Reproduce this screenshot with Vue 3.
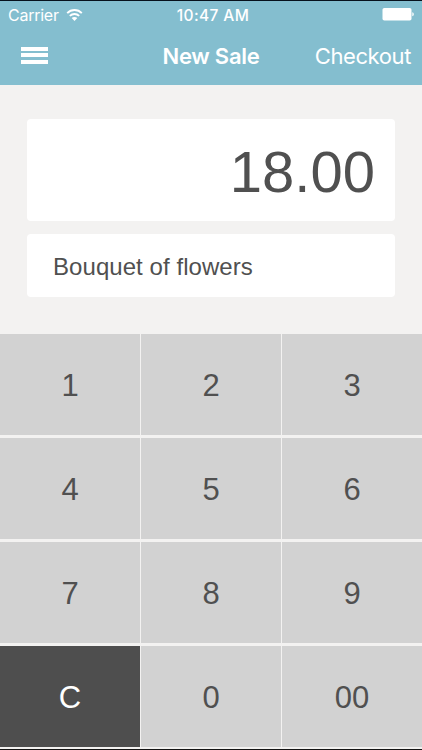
<script setup>
import { ref } from 'vue'

const amount = ref('18.00')
const description = ref('Bouquet of flowers')

const keys = ['1', '2', '3', '4', '5', '6', '7', '8', '9', 'C', '0', '00']

const pressKey = (key) => {
  if (key === 'C') {
    amount.value = '0.00'
    return
  }
  const cents = Number(amount.value.replace('.', '') + key)
  if (cents < 10000000) {
    amount.value = (cents / 100).toFixed(2)
  }
}
</script>

<template>
  <div class="screen">
    <header class="header">
      <div class="status-bar">
        <div class="carrier">
          <span class="carrier-name">Carrier</span>
          <svg class="wifi" width="17" height="12" viewBox="0 0 17 12">
            <path d="M1.2 4.2C5.3 0 11.7 0 15.8 4.2" />
            <path d="M3.8 6.9C6.5 4.3 10.5 4.3 13.2 6.9" />
            <path class="dot" d="M5.7 9C7.3 7.5 9.7 7.5 11.3 9L8.5 11.9Z" />
          </svg>
        </div>
        <div class="time">10:47 AM</div>
        <div class="power">
          <svg width="32" height="13" viewBox="0 0 32 13">
            <rect x="0.5" y="0" width="29" height="12.5" rx="1.8" />
            <path d="M30.3 4.3C32.3 5 32.3 7.6 30.3 8.3Z" />
          </svg>
        </div>
      </div>
      <nav class="nav-bar">
        <div class="menu">
          <span></span>
          <span></span>
          <span></span>
        </div>
        <div class="title">New Sale</div>
        <div class="checkout">Checkout</div>
      </nav>
    </header>
    <main class="sale">
      <div class="amount"><span>{{ amount }}</span></div>
      <div class="description"><span>{{ description }}</span></div>
    </main>
    <div class="keypad">
      <div v-for="key in keys"
           :key="key"
           class="key"
           :class="key === 'C' ? 'clear' : ''"
           @click="pressKey(key)">
        <span>{{ key }}</span>
      </div>
    </div>
  </div>
</template>

<style>
body {
  margin: 0;
  background: #f3f2f1;
}
</style>

<style scoped>
.screen {
  box-sizing: border-box;
  width: 422px;
  height: 750px;
  display: flex;
  flex-direction: column;
  overflow: hidden;
  border-top: 1px solid #06111c;
  border-bottom: 1px solid #141414;
  background: #f3f2f1;
  color: #505050;
  font-family: "Liberation Sans", Arial, sans-serif;
}

.header {
  height: 84px;
  background: #84becf;
  color: #fff;
  font-family: Inter, "Liberation Sans", sans-serif;
}

.status-bar {
  display: grid;
  grid-template-columns: 1fr auto 1fr;
  align-items: center;
  height: 27px;
  padding: 0 8px;
  font-size: 16px;
}

.carrier {
  display: flex;
  align-items: center;
  gap: 7px;
}

.carrier-name {
  letter-spacing: -0.25px;
}

.wifi {
  fill: none;
  stroke: #fff;
  stroke-width: 1.9;
}

.wifi .dot {
  fill: #fff;
  stroke: none;
}

.time {
  padding: 1px 0 0 4px;
  font-size: 15.5px;
  font-weight: 500;
  letter-spacing: 0.4px;
}

.power {
  display: flex;
  justify-content: flex-end;
  fill: #fff;
}

.nav-bar {
  display: grid;
  grid-template-columns: 1fr auto 1fr;
  align-items: center;
  height: 55px;
  padding: 0 11px;
}

.menu {
  display: flex;
  flex-direction: column;
  gap: 2.5px;
  width: 27px;
  margin: 0 0 1px 10px;
}

.menu span {
  height: 4px;
  background: #fff;
}

.title {
  padding-top: 1px;
  font-size: 22px;
  font-weight: 600;
  letter-spacing: -0.25px;
}

.checkout {
  padding-top: 1px;
  font-size: 22px;
  letter-spacing: -0.4px;
  text-align: right;
}

.sale {
  display: flex;
  flex-direction: column;
  gap: 13px;
  height: 249px;
  box-sizing: border-box;
  padding: 34px 27px 0;
}

.amount,
.description {
  display: flex;
  align-items: center;
  box-sizing: border-box;
  border-radius: 4px;
  background: #fff;
}

.amount {
  height: 102px;
  padding: 3px 20px 0 0;
  justify-content: flex-end;
  font-size: 58px;
}

.description {
  height: 63px;
  padding: 2px 0 0 26px;
  font-size: 24px;
  letter-spacing: 0.06px;
}

.keypad {
  display: grid;
  grid-template-columns: repeat(3, 1fr);
  grid-auto-rows: 101px;
  gap: 3px 1px;
}

.key {
  display: flex;
  align-items: center;
  justify-content: center;
  box-sizing: border-box;
  padding-top: 2px;
  background: #d2d2d2;
  font-size: 31px;
  cursor: pointer;
  user-select: none;
}

.clear {
  background: #4e4e4e;
  color: #fff;
}
</style>
